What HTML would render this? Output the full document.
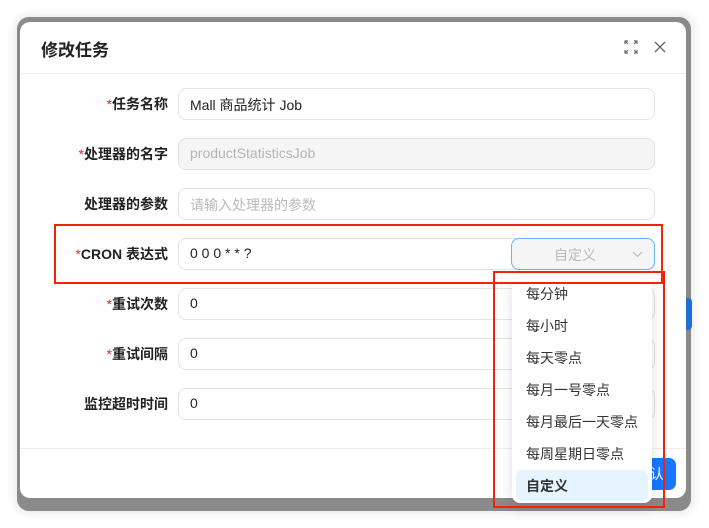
<!DOCTYPE html>
<html><head><meta charset="utf-8"><style>
*{box-sizing:border-box;margin:0;padding:0}
body{width:709px;height:528px;background:#fff;font-family:"Liberation Sans","Noto Sans CJK SC",sans-serif;position:relative;overflow:hidden}
.frame{position:absolute;left:17px;top:17px;width:674px;height:494px;background:#8a8a8a;border-radius:12px;box-shadow:0 0 8px 4px #eee}
.dlg{position:absolute;left:20px;top:22px;width:666px;height:476px;background:#fff;border-radius:10px;overflow:hidden}
.title{position:absolute;left:21px;top:14px;font-size:17px;font-weight:bold;color:#222}
.hd{position:absolute;left:0;right:0;top:51px;border-top:1px solid #eee}
.fd{position:absolute;left:0;right:0;top:426px;border-top:1px solid #eee}
.lbl{position:absolute;right:518px;font-size:14px;color:#222;white-space:nowrap;font-weight:bold}
.lbl b{color:#f5222d;font-weight:normal}
.inp{position:absolute;left:158px;width:477px;height:32px;border:1px solid #e2e2e2;border-radius:8px;font-size:14px;color:#222;padding:6px 11px}
.dis{background:#f5f5f5;color:#b5b5b5}
.ph{color:#bbb}
.sel{position:absolute;left:491px;top:216px;width:144px;height:32px;border:1px solid #69b1ff;border-radius:8px;background:#f5f5f5;color:#bbb;font-size:14px;padding:6px 0 0 42px}
.dd{position:absolute;left:512px;top:277px;width:140px;height:226px;background:#fff;border-radius:8px;box-shadow:0 4px 12px rgba(0,0,0,.12)}
.it{position:absolute;left:14px;font-size:14px;color:#333}
.red{position:absolute;border:2px solid #f0240a}
</style></head><body>
<div class="frame"></div>
<div style="position:absolute;left:684px;top:298px;width:8px;height:32px;background:#1e6fd8;border-radius:4px"></div>
<div class="dlg">
<div class="title">修改任务</div>
<svg style="position:absolute;left:604px;top:18px" width="14" height="14" viewBox="0 0 14 14" fill="none" stroke="#666" stroke-width="1.2"><path d="M1 4V1h3M1 1l3 3M13 4V1h-3M13 1l-3 3M1 10v3h3M1 13l3-3M13 10v3h-3M13 13l-3-3"/></svg>
<svg style="position:absolute;left:634px;top:19px" width="12" height="12" viewBox="0 0 12 12" stroke="#666" stroke-width="1.3"><path d="M1 1l10 10M11 1L1 11"/></svg>
<div class="hd"></div>
<div class="lbl" style="top:72px"><b>*</b>任务名称</div>
<div class="inp" style="top:66px">Mall 商品统计 Job</div>
<div class="lbl" style="top:122px"><b>*</b>处理器的名字</div>
<div class="inp dis" style="top:116px">productStatisticsJob</div>
<div class="lbl" style="top:172px">处理器的参数</div>
<div class="inp ph" style="top:166px">请输入处理器的参数</div>
<div class="lbl" style="top:222px"><b>*</b>CRON 表达式</div>
<div class="inp" style="top:216px">0 0 0 * * ?</div>
<div class="sel">自定义<svg style="position:absolute;left:120px;top:12px" width="11" height="7" viewBox="0 0 11 7" fill="none" stroke="#bbb" stroke-width="1.2"><path d="M1 1l4.5 4.5L10 1"/></svg></div>
<div class="lbl" style="top:272px"><b>*</b>重试次数</div>
<div class="inp" style="top:266px">0</div>
<div class="lbl" style="top:322px"><b>*</b>重试间隔</div>
<div class="inp" style="top:316px">0</div>
<div class="lbl" style="top:372px">监控超时时间</div>
<div class="inp" style="top:366px">0</div>
<div class="fd"></div>
<div style="position:absolute;left:620px;top:436px;width:36px;height:32px;background:#1677ff;border-radius:7px;color:#fff;font-size:14px;padding:6px 0 0 10px">认</div>
</div>
<div class="dd">
<div class="it" style="top:7px">每分钟</div>
<div class="it" style="top:39px">每小时</div>
<div class="it" style="top:71px">每天零点</div>
<div class="it" style="top:103px">每月一号零点</div>
<div class="it" style="top:135px">每月最后一天零点</div>
<div class="it" style="top:167px">每周星期日零点</div>
<div style="position:absolute;left:4px;top:193px;width:132px;height:31px;background:#e6f4ff;border-radius:6px"></div>
<div class="it" style="top:199px;font-weight:bold">自定义</div>
</div>
<div class="red" style="left:54px;top:224px;width:609px;height:60px"></div>
<div class="red" style="left:493px;top:271px;width:172px;height:237px"></div>
</body></html>
